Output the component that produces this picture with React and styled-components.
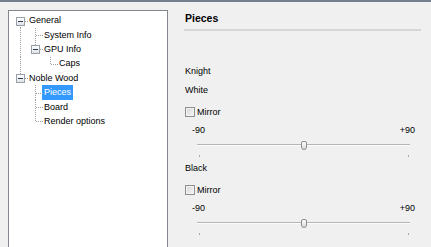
import React from 'react';
import styled, { createGlobalStyle, css } from 'styled-components';

const GlobalStyle = createGlobalStyle`
  html, body {
    margin: 0;
    padding: 0;
    background: #f0f0f0;
    overflow: hidden;
  }
  body {
    font-family: "Liberation Sans", Arial, sans-serif;
    font-size: 9px;
    color: #000;
  }
`;

const Window = styled.div`
  width: 431px;
  height: 247px;
  box-sizing: border-box;
  border-top: 2px solid #74808d;
  background: #f0f0f0;
  display: flex;
  overflow: hidden;
`;

// ---- tree on the left ----

const TreeBox = styled.div`
  flex: none;
  box-sizing: border-box;
  width: 160px;
  height: 260px;
  margin: 8px 0 0 8px;
  padding: 2.5px 0 0 4px;
  border: 1px solid #828790;
  background: #fff;
`;

const Row = styled.div`
  display: flex;
  height: 14.4px;
`;

const dottedV = css`
  background-image: linear-gradient(to bottom, #a0a0a0 50%, transparent 50%);
  background-size: 1px 2px;
`;

const Guide = styled.div`
  position: relative;
  flex: none;
  width: 15px;
  ${p => p.$line && css`
    &::before {
      content: '';
      position: absolute;
      left: 7px;
      top: 0;
      bottom: 0;
      width: 1px;
      ${dottedV}
    }
  `}
`;

const Node = styled.div`
  position: relative;
  flex: none;
  width: 15px;
`;

const VLine = styled.span`
  position: absolute;
  left: 7px;
  width: 1px;
  top: ${p => (p.$top ? '0' : '50%')};
  bottom: ${p => (p.$bottom ? '0' : '50%')};
  ${dottedV}
`;

const HLine = styled.span`
  position: absolute;
  left: 8px;
  right: 0;
  top: 50%;
  height: 1px;
  background-image: linear-gradient(to right, #a0a0a0 50%, transparent 50%);
  background-size: 2px 1px;
`;

const Expander = styled.span`
  position: absolute;
  left: 3px;
  top: 50%;
  margin-top: -4px;
  width: 9px;
  height: 9px;
  box-sizing: border-box;
  border: 1px solid #98a0a9;
  background: linear-gradient(#ffffff, #dfe2e6);
  &::after {
    content: '';
    position: absolute;
    left: 1px;
    right: 1px;
    top: 3px;
    height: 1px;
    background: #2d3c52;
  }
`;

const Label = styled.span`
  align-self: center;
  margin-left: -1px;
  padding: 0 2px;
  height: 15px;
  line-height: 15px;
  white-space: nowrap;
  ${p => p.$selected && css`
    background: #3399ff;
    color: #fff;
  `}
`;

const treeRows = [
  { label: 'General', guides: [], top: false, bottom: true, open: true },
  { label: 'System Info', guides: [true], top: true, bottom: true },
  { label: 'GPU Info', guides: [true], top: true, bottom: false, open: true },
  { label: 'Caps', guides: [true, false], top: true, bottom: false },
  { label: 'Noble Wood', guides: [], top: true, bottom: false, open: true },
  { label: 'Pieces', guides: [false], top: true, bottom: true, selected: true },
  { label: 'Board', guides: [false], top: true, bottom: true },
  { label: 'Render options', guides: [false], top: true, bottom: false },
];

// ---- settings panel on the right ----

const Panel = styled.div`
  flex: 1;
  display: flex;
  flex-direction: column;
  padding: 9px 10px 0 16px;
`;

const Title = styled.div`
  height: 15px;
  line-height: 15px;
  font-size: 10.5px;
  font-weight: bold;
  padding-left: 1px;
`;

const Rule = styled.div`
  height: 2px;
  margin-top: 3px;
  background: #d6d6d6;
`;

const Heading = styled.div`
  height: 14px;
  line-height: 14px;
  padding-left: 1px;
  margin-top: ${p => p.$gap || 0}px;
`;

const Section = styled.div`
  display: flex;
  flex-direction: column;
  margin-top: ${p => p.$gap}px;
`;

const CheckRow = styled.label`
  display: flex;
  align-items: center;
  height: 14px;
  margin-top: 8px;
  padding-left: 1px;
`;

const CheckBox = styled.span`
  width: 10px;
  height: 10px;
  box-sizing: border-box;
  border: 1px solid #8e8f8f;
  background: linear-gradient(135deg, #d6d6d6, #f8f8f8);
  box-shadow: inset 0 0 0 1px #f2f2f2;
  margin-right: 2px;
`;

const RangeLabels = styled.div`
  display: flex;
  justify-content: space-between;
  height: 14px;
  line-height: 14px;
  margin-top: 4px;
  padding: 0 6px 0 8px;
`;

const Slider = styled.div`
  position: relative;
  height: 10px;
  margin: 4px 11px 0 13px;
`;

const Track = styled.div`
  margin-top: 3px;
  height: 0;
  border-top: 1px solid #b7b7b7;
  border-bottom: 1px solid #fbfbfb;
`;

const Thumb = styled.div`
  position: absolute;
  top: 0;
  left: 50%;
  margin-left: -3px;
  width: 6px;
  height: 9px;
  box-sizing: border-box;
  border: 1px solid #8c8c8c;
  border-radius: 2px 2px 3px 3px;
  background: linear-gradient(#fdfdfd, #dadada);
`;

const Ticks = styled.div`
  display: flex;
  justify-content: space-between;
  height: 2px;
  margin: 4px 12px 0 15px;
`;

const Tick = styled.span`
  width: 1px;
  height: 2px;
  background: #a8a8a8;
`;

const PieceSection = ({ name, gap }) => (
  <Section $gap={gap}>
    <Heading>{name}</Heading>
    <CheckRow>
      <CheckBox />
      Mirror
    </CheckRow>
    <RangeLabels>
      <span>-90</span>
      <span>+90</span>
    </RangeLabels>
    <Slider>
      <Track />
      <Thumb />
    </Slider>
    <Ticks>
      <Tick />
      <Tick />
    </Ticks>
  </Section>
);

const App = () => (
  <>
    <GlobalStyle />
    <Window>
      <TreeBox>
        {treeRows.map(r => (
          <Row key={r.label}>
            {r.guides.map((g, i) => (
              <Guide key={i} $line={g} />
            ))}
            <Node>
              <VLine $top={r.top} $bottom={r.bottom} />
              <HLine />
              {r.open && <Expander />}
            </Node>
            <Label $selected={r.selected}>{r.label}</Label>
          </Row>
        ))}
      </TreeBox>

      <Panel>
        <Title>Pieces</Title>
        <Rule />
        <Heading $gap={33}>Knight</Heading>
        <PieceSection name="White" gap={5} />
        <PieceSection name="Black" gap={4} />
      </Panel>
    </Window>
  </>
);

export default App;
